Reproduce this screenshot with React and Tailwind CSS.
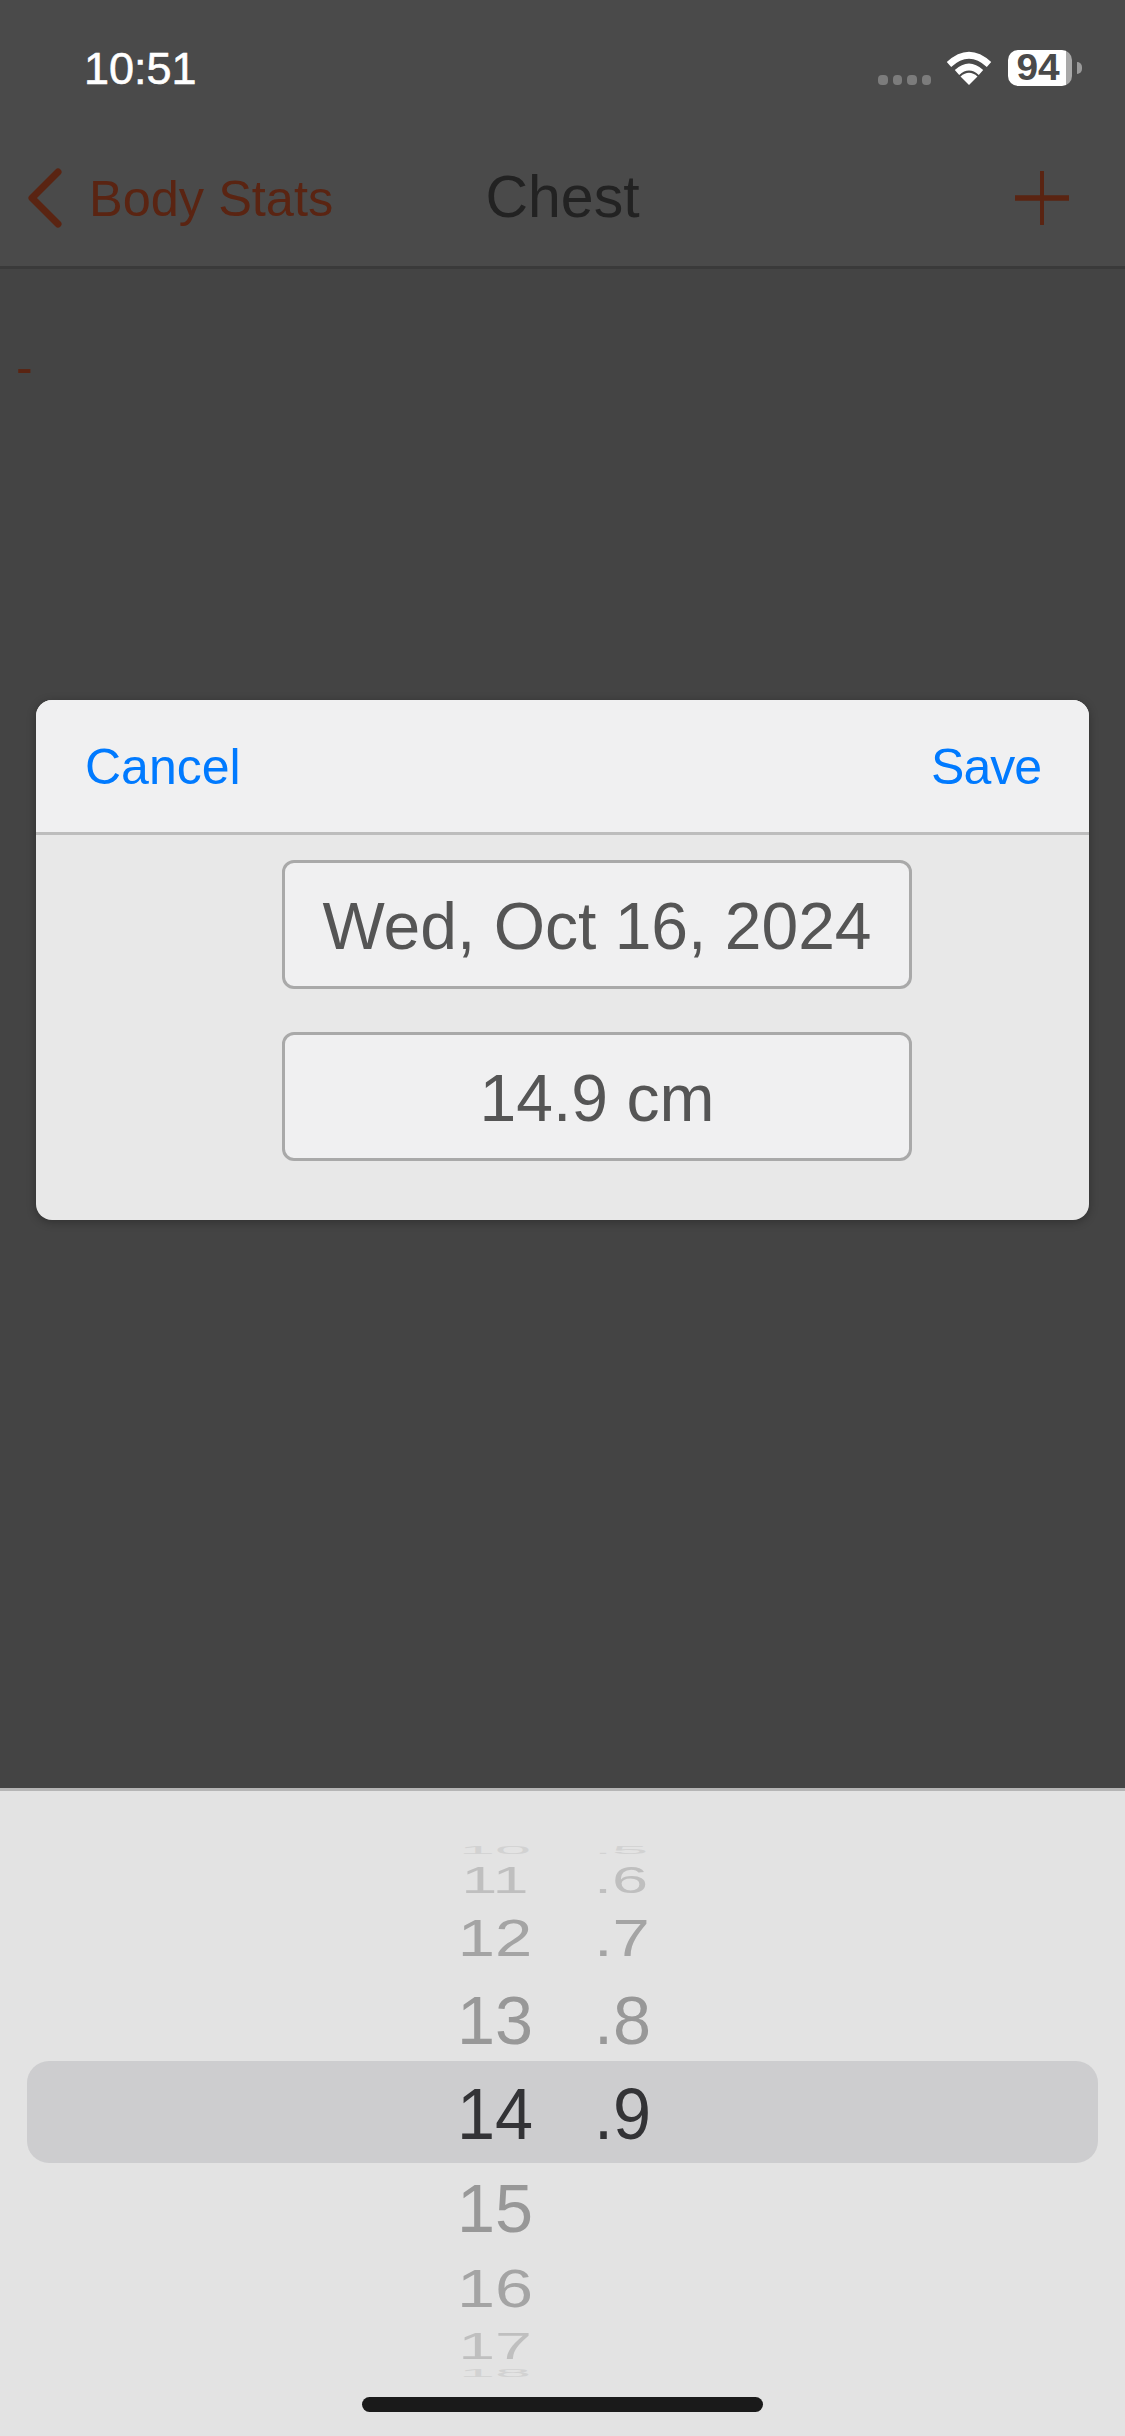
const font = { fontFamily: '"Liberation Sans", Arial, sans-serif' };

const rows = [
  { n: "10", d: ".5", h: "h-[15px]", t: "scale-x-[0.9] scale-y-[0.14] text-[#d2d2d2]" },
  { n: "11", d: ".6", h: "h-[44px]", t: "scale-x-[0.9] scale-y-[0.5] text-[#bfbfbf]" },
  { n: "12", d: ".7", h: "h-[72px]", t: "scale-x-[0.93] scale-y-[0.73] text-[#a4a4a4]" },
  { n: "13", d: ".8", h: "h-[92px]", t: "scale-x-[0.95] scale-y-[0.96] text-[#989898]" },
  { n: "14", d: ".9", h: "h-[96px]", t: "scale-x-[0.95] text-[#333336]" },
  { n: "15", d: "", h: "h-[92px]", t: "scale-x-[0.95] scale-y-[0.96] text-[#989898]" },
  { n: "16", d: "", h: "h-[68px]", t: "scale-x-[0.95] scale-y-[0.74] text-[#a4a4a4]" },
  { n: "17", d: "", h: "h-[47px]", t: "scale-x-[0.92] scale-y-[0.5] text-[#bfbfbf]" },
  { n: "18", d: "", h: "h-[9px]", t: "scale-x-[0.9] scale-y-[0.14] text-[#d2d2d2]" },
];

function Wifi() {
  return (
    <svg width="46" height="34" viewBox="0 0 46 34" fill="none">
      <path d="M3 13.5Q23 -5 43 13.5" stroke="#fff" strokeWidth="6.5" />
      <path d="M11 21.5Q23 10.5 35 21.5" stroke="#fff" strokeWidth="6.5" />
      <path d="M23 34L14.5 25.5Q23 18 31.5 25.5Z" fill="#fff" />
    </svg>
  );
}

function StatusBar() {
  return (
    <div className="flex h-[136px] items-center justify-between pl-[84px] pr-[43px]">
      <span className="text-[45px] leading-none text-white [-webkit-text-stroke:0.6px_white]">10:51</span>
      <div className="flex items-center">
        <div className="mt-[24px] flex gap-[5px]">
          <span className="h-[10px] w-[9.5px] rounded-[4px] bg-[#7c7c7c]" />
          <span className="h-[10px] w-[9.5px] rounded-[4px] bg-[#7c7c7c]" />
          <span className="h-[10px] w-[9.5px] rounded-[4px] bg-[#7c7c7c]" />
          <span className="h-[10px] w-[9.5px] rounded-[4px] bg-[#7c7c7c]" />
        </div>
        <div className="ml-[15px] mr-[16px] -mt-[1px]">
          <Wifi />
        </div>
        <div className="flex items-center">
          <div className="flex h-[36px] w-[64px] items-center justify-center rounded-[10px] bg-[linear-gradient(90deg,#fff_91%,#a8a8a8_91%)] pr-[3px] text-[36px] font-bold leading-none text-[#4a4a4a]">
            <span className="scale-x-[1.08]">94</span>
          </div>
          <div className="ml-[5px] h-[12px] w-[5px] rounded-r-full bg-[#9a9a9a]" />
        </div>
      </div>
    </div>
  );
}

function NavBar() {
  return (
    <div className="flex h-[124px] items-center">
      <div className="flex flex-1 items-center">
        <svg width="36" height="60" viewBox="0 0 36 60" fill="none" className="ml-[28px] shrink-0">
          <path d="M30 4L4 30L30 56" stroke="#5a2412" strokeWidth="7" strokeLinecap="round" strokeLinejoin="round" />
        </svg>
        <span className="ml-[25px] mt-[2px] text-[50.5px] leading-none text-[#5a2412]">Body Stats</span>
      </div>
      <span className="-mt-[2px] text-[59px] leading-none text-[#222222]">Chest</span>
      <div className="flex flex-1 justify-end">
        <svg width="54" height="54" viewBox="0 0 54 54" fill="none" className="mr-[56px]">
          <path d="M27 1V53" stroke="#5a2412" strokeWidth="4" strokeLinecap="round" />
          <path d="M1 27H53" stroke="#5a2412" strokeWidth="5.5" strokeLinecap="round" />
        </svg>
      </div>
    </div>
  );
}

function Field({ children }) {
  return (
    <div className="flex h-[129px] w-[630px] items-center justify-center rounded-[12px] border-[3px] border-[#a9a9a9] bg-[#f0f0f1] pt-[3px] text-[66px] leading-none text-[#555555]">
      {children}
    </div>
  );
}

function Card() {
  return (
    <div className="mx-[36px] h-[520px] overflow-hidden rounded-[16px] bg-[#e8e8e8] shadow-[0_2px_10px_rgba(0,0,0,0.3)]">
      <div className="flex h-[135px] items-center justify-between border-b-[3px] border-[#bdbdbd] bg-[#f0f0f1] pl-[49px] pr-[48px] pt-[2px] text-[50px] leading-none text-[#007aff]">
        <span>Cancel</span>
        <span className="tracking-[-1px]">Save</span>
      </div>
      <div className="flex flex-col gap-[43px] pl-[246px] pt-[25px]">
        <Field>Wed, Oct 16, 2024</Field>
        <Field>14.9 cm</Field>
      </div>
    </div>
  );
}

function Picker() {
  return (
    <div className="relative flex h-[648px] flex-col border-t-[3px] border-[#b5b5b5] bg-[#e3e3e3] pt-[52px]">
      <div className="absolute left-[27px] top-[270px] h-[102px] w-[1071px] rounded-[22px] bg-[#cdcdcf]" />
      <div className="relative flex flex-col pl-[455px]">
        {rows.map((r) => (
          <div key={r.n} className={`flex items-center ${r.h}`}>
            <span className={`block w-[80px] shrink-0 text-center text-[72px] leading-none ${r.t}`}>{r.n}</span>
            <span className={`ml-[59px] block origin-left text-[72px] leading-none ${r.t}`}>{r.d}</span>
          </div>
        ))}
      </div>
      <div className="mx-auto mt-[19px] h-[15px] w-[401px] rounded-full bg-[#1a1a1a]" />
    </div>
  );
}

export default function App() {
  return (
    <div className="flex h-[2436px] w-[1125px] flex-col overflow-hidden bg-[#444444]" style={font}>
      <header className="h-[269px] border-b-[3px] border-[#3a3a3a] bg-[#4a4a4a]">
        <StatusBar />
        <NavBar />
      </header>
      <main className="flex-1">
        <div className="h-[431px] pl-[16px] pt-[73px] text-[50px] leading-none text-[#5a2412]">-</div>
        <Card />
      </main>
      <Picker />
    </div>
  );
}
